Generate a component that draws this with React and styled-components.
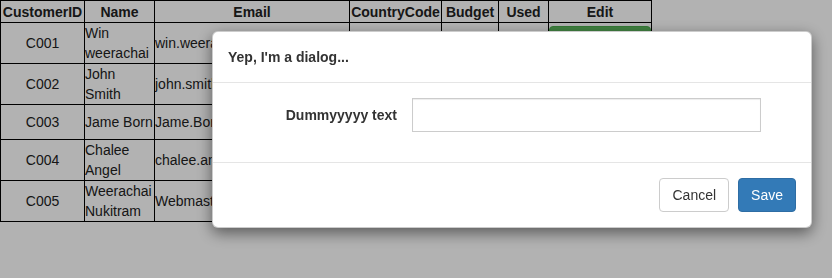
import React from 'react';
import styled, { createGlobalStyle } from 'styled-components';

const customers = [
  { id: 'C001', name: 'Win weerachai', email: 'win.weerachai@thaicreate.com', country: 'TH', budget: '1000000', used: '600000' },
  { id: 'C002', name: 'John Smith', email: 'john.smith@thaicreate.com', country: 'UK', budget: '2000000', used: '800000' },
  { id: 'C003', name: 'Jame Born', email: 'Jame.Born@thaicreate.com', country: 'US', budget: '3000000', used: '600000' },
  { id: 'C004', name: 'Chalee Angel', email: 'chalee.angel@thaicreate.com', country: 'US', budget: '4000000', used: '100000' },
  { id: 'C005', name: 'Weerachai Nukitram', email: 'Webmaster@thaicreate.com', country: 'TH', budget: '5000000', used: '300000' },
];

const columns = [
  { label: 'CustomerID', width: 84 },
  { label: 'Name', width: 70 },
  { label: 'Email', width: 195 },
  { label: 'CountryCode', width: 92 },
  { label: 'Budget', width: 57 },
  { label: 'Used', width: 50 },
  { label: 'Edit', width: 103 },
];

const GlobalStyle = createGlobalStyle`
  html, body {
    margin: 0;
    padding: 0;
    background: #fff;
    font-family: "Liberation Sans", Arial, sans-serif;
    font-size: 14px;
    line-height: 20px;
    color: #333;
  }
  * { box-sizing: border-box; }
`;

const Page = styled.div`
  width: 832px;
  height: 278px;
  overflow: hidden;
`;

const Table = styled.table`
  border-collapse: collapse;
  table-layout: fixed;
  width: 652px;
  color: #222;
`;

const Th = styled.th`
  border: 1px solid #000;
  padding: 0 1px;
  font-weight: bold;
  text-align: center;
  height: 22px;
  white-space: nowrap;
  overflow: hidden;
`;

const Td = styled.td`
  border: 1px solid #000;
  padding: 0;
  height: 34px;
  vertical-align: middle;
  text-align: ${p => (p.center ? 'center' : 'left')};
  overflow: hidden;
  white-space: ${p => (p.nowrap ? 'nowrap' : 'normal')};
`;

const EditButton = styled.button`
  display: block;
  width: 100%;
  height: 34px;
  border: 1px solid #4cae4c;
  border-radius: 4px;
  background: #5cb85c;
  color: #fff;
  font: inherit;
`;

const Backdrop = styled.div`
  position: fixed;
  inset: 0;
  background: rgba(0, 0, 0, 0.3);
`;

const Dialog = styled.div`
  position: fixed;
  left: 212px;
  top: 31px;
  width: 600px;
  background: #fff;
  border: 1px solid rgba(0, 0, 0, 0.2);
  border-radius: 6px;
  box-shadow: 0 5px 15px rgba(0, 0, 0, 0.5);
`;

const Header = styled.div`
  padding: 15px;
  border-bottom: 1px solid #e5e5e5;
`;

const Title = styled.div`
  font-weight: bold;
  font-size: 14px;
  line-height: 20px;
`;

const Body = styled.div`
  padding: 15px 15px 30px;
`;

const FormRow = styled.div`
  display: flex;
  align-items: center;
`;

const Label = styled.label`
  width: 184px;
  padding-right: 15px;
  text-align: right;
  font-weight: bold;
`;

const Input = styled.input`
  width: 349px;
  height: 34px;
  border: 1px solid #ccc;
  border-radius: 0;
  padding: 6px 12px;
  font: inherit;
  box-shadow: inset 0 1px 1px rgba(0, 0, 0, 0.075);
`;

const Footer = styled.div`
  display: flex;
  justify-content: flex-end;
  gap: 9px;
  padding: 15px;
  border-top: 1px solid #e5e5e5;
`;

const Button = styled.button`
  height: 34px;
  padding: 6px 12px;
  font: inherit;
  border-radius: 4px;
  border: 1px solid ${p => (p.primary ? '#2e6da4' : '#ccc')};
  background: ${p => (p.primary ? '#337ab7' : '#fff')};
  color: ${p => (p.primary ? '#fff' : '#333')};
`;

export default function App() {
  return (
    <Page>
      <GlobalStyle />
      <Table>
        <colgroup>
          {columns.map(c => <col key={c.label} style={{ width: c.width }} />)}
        </colgroup>
        <thead>
          <tr>
            {columns.map(c => <Th key={c.label}>{c.label}</Th>)}
          </tr>
        </thead>
        <tbody>
          {customers.map(c => (
            <tr key={c.id}>
              <Td center>{c.id}</Td>
              <Td>{c.name}</Td>
              <Td nowrap>{c.email}</Td>
              <Td center>{c.country}</Td>
              <Td center>{c.budget}</Td>
              <Td center>{c.used}</Td>
              <Td><EditButton>Edit</EditButton></Td>
            </tr>
          ))}
        </tbody>
      </Table>
      <Backdrop />
      <Dialog>
        <Header>
          <Title>Yep, I'm a dialog...</Title>
        </Header>
        <Body>
          <FormRow>
            <Label>Dummyyyyy text</Label>
            <Input type="text" />
          </FormRow>
        </Body>
        <Footer>
          <Button>Cancel</Button>
          <Button primary>Save</Button>
        </Footer>
      </Dialog>
    </Page>
  );
}
